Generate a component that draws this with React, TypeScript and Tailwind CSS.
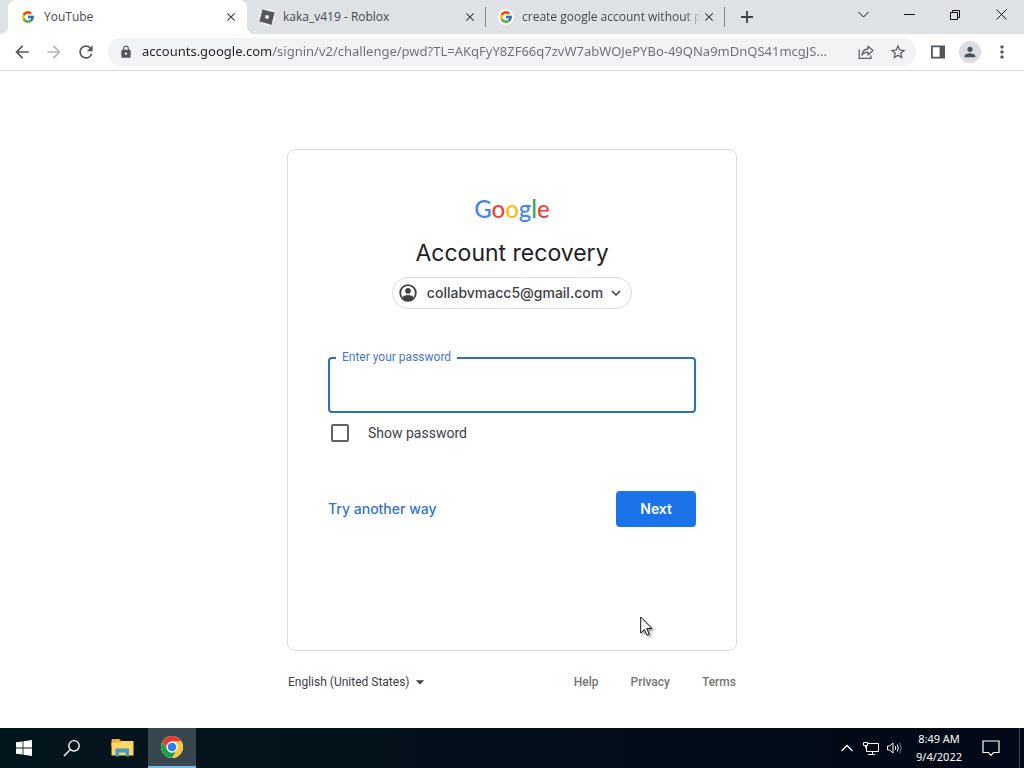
import { useState } from "react";
import type { ReactNode } from "react";
import { clsx } from "clsx";
import { FcGoogle } from "react-icons/fc";
import {
  MdArrowBack,
  MdArrowDropDown,
  MdArrowForward,
  MdClose,
  MdExpandMore,
  MdLock,
  MdMoreVert,
  MdPerson,
  MdRefresh,
  MdStarBorder,
} from "react-icons/md";

const RobloxIcon = () => (
  <svg viewBox="0 0 16 16" className="size-4">
    <path fillRule="evenodd" fill="#55575a" d="M3.4.4 15.6 3.6 12.5 15.7.4 12.4ZM6.7 5.9 6 9.3 9.3 10.1 10.1 6.7Z" />
  </svg>
);

const ShareIcon = () => (
  <svg viewBox="0 0 16 16" className="size-4" fill="none" stroke="#5f6368" strokeWidth="1.3">
    <path d="M1.2 5.5V14.3H13V11.5" />
    <path d="M4 11.3C4.3 7.6 6.4 5.2 10 5V2.2L15 6.6 10 10.9V8.2C7.2 8.2 5.2 9.2 4 11.3Z" strokeLinejoin="round" />
  </svg>
);

const SidePanelIcon = () => (
  <svg viewBox="0 0 16 16" className="size-4">
    <path fillRule="evenodd" fill="#54575b" d="M1 1.5H15V14.5H1ZM2.8 3.3V12.7H9.6V3.3Z" />
  </svg>
);

const AccountIcon = () => (
  <svg viewBox="0 0 18 18" className="size-[18px]">
    <circle cx="9" cy="9" r="7.8" fill="none" stroke="#3c4043" strokeWidth="1.8" />
    <circle cx="9" cy="6.9" r="2.8" fill="#3c4043" />
    <path d="M3.2 13.4C4.6 11.8 6.6 11 9 11S13.4 11.8 14.8 13.4C13.4 15.4 11.4 16.6 9 16.6S4.6 15.4 3.2 13.4Z" fill="#3c4043" />
  </svg>
);

const WindowsIcon = () => (
  <svg viewBox="0 0 16 16" className="size-4" fill="#fff">
    <path d="M0 2.3 6.6 1.4V7.6H0ZM7.4 1.2 16 0V7.6H7.4ZM0 8.4H6.6V14.6L0 13.7ZM7.4 8.4H16V16L7.4 14.8Z" />
  </svg>
);

const SearchIcon = () => (
  <svg viewBox="0 0 18 18" className="size-[18px]" fill="none" stroke="#fff" strokeWidth="1.4">
    <circle cx="11" cy="6.8" r="5.2" />
    <path d="M7.3 10.6 1 17" />
  </svg>
);

const ExplorerIcon = () => (
  <svg viewBox="0 0 24 20" className="h-5 w-6">
    <path fill="#e8b03a" d="M1.5 2Q1.5 1 2.5 1H9.5L11 3H22V8H1.5Z" />
    <path fill="#fbd665" d="M1.5 4.5H10.5L12 3H23.5V17.5H1.5Z" />
    <path fill="#4398c8" d="M5.5 18.5V11.5Q5.5 10.5 6.5 10.5H18Q19 10.5 19 11.5V18.5H15.5V14.5H9V18.5Z" />
  </svg>
);

const ChromeIcon = () => (
  <svg viewBox="0 0 48 48" className="size-6">
    <circle cx="24" cy="24" r="22" fill="#fff" />
    <path fill="#e33b2e" d="M4.95 13A22 22 0 0 1 43.05 13H24A11 11 0 0 0 14.47 29.5Z" />
    <path fill="#fcc934" d="M43.05 13A22 22 0 0 1 24 46L33.53 29.5A11 11 0 0 0 24 13Z" />
    <path fill="#1e9e4a" d="M24 46A22 22 0 0 1 4.95 13L14.47 29.5A11 11 0 0 0 33.53 29.5Z" />
    <circle cx="24" cy="24" r="11" fill="#fff" />
    <circle cx="24" cy="24" r="8.7" fill="#2f7de9" />
  </svg>
);

const NetworkIcon = () => (
  <svg viewBox="0 0 16 16" className="size-4" fill="none" stroke="#fff" strokeWidth="1">
    <path d="M5 3.5H15.5V11.5H3.5V6M9.5 11.5V14M5 14.5H12" />
    <path d="M.5 2.5H4.5V5.5H.5ZM2.5 5.5V8" />
  </svg>
);

const VolumeIcon = () => (
  <svg viewBox="0 0 16 16" className="size-4" fill="none" stroke="#fff" strokeWidth="1">
    <path d="M.5 6H2.7L6 3V13L2.7 10H.5Z" />
    <path d="M8.2 6Q9.4 8 8.2 10M10.3 4.5Q12.4 8 10.3 11.5" />
    <path d="M12.5 3Q15.6 8 12.5 13" stroke="#7c8590" />
  </svg>
);

const NotificationIcon = () => (
  <svg viewBox="0 0 18 18" className="size-[18px]" fill="none" stroke="#fff" strokeWidth="1.2">
    <path d="M1 2H17V13.5H11.5L9 16.3 6.5 13.5H1Z" />
  </svg>
);

type Tab = { title: string; icon: ReactNode };

const tabs: Tab[] = [
  { title: "YouTube", icon: <FcGoogle className="size-3.5" /> },
  { title: "kaka_v419 - Roblox", icon: <RobloxIcon /> },
  { title: "create google account without p", icon: <FcGoogle className="size-3.5" /> },
];

const windowButtons = [
  { label: "Search tabs", path: "M.5 3 5.5 8 10.5 3" },
  { label: "Minimize", path: "M0 5.5H11" },
  { label: "Restore", path: "M.5 3.5H7.5V10.5H.5ZM2.5 3.5V1.5H9.5V8.5H7.5" },
  { label: "Close", path: "M.5 .5 10.5 10.5M10.5 .5 .5 10.5" },
];

const logoLetters = [
  { letter: "G", color: "text-[#4285f4]" },
  { letter: "o", color: "text-[#ea4335]" },
  { letter: "o", color: "text-[#fbbc05]" },
  { letter: "g", color: "text-[#4285f4]" },
  { letter: "l", color: "text-[#34a853]" },
  { letter: "e", color: "text-[#ea4335]" },
];

const TabStrip = () => {
  const [active, setActive] = useState(0);

  return (
    <div className="flex h-[34px] bg-[#dee1e6] pl-2">
      {tabs.map((tab, i) => (
        <div
          key={tab.title}
          className={clsx(
            "relative flex w-[239px] min-w-0 items-center pr-2 pl-3",
            i === active &&
              "rounded-t-lg bg-white before:absolute before:bottom-0 before:-left-2 before:size-2 before:bg-[radial-gradient(circle_at_0_0,transparent_8px,#fff_8px)] after:absolute after:-right-2 after:bottom-0 after:size-2 after:bg-[radial-gradient(circle_at_100%_0,transparent_8px,#fff_8px)]",
            i !== active && "after:absolute after:right-0 after:h-5 after:w-px after:bg-[#85888d]"
          )}
        >
          <button
            onClick={() => setActive(i)}
            className="flex min-w-0 flex-1 items-center gap-2 font-['Open_Sans',sans-serif] text-xs text-[#45494d]"
          >
            <span className="flex size-4 shrink-0 items-center justify-center rounded-full bg-white/80">{tab.icon}</span>
            <span
              className={clsx(
                "flex-1 text-left whitespace-nowrap",
                i === 2 && "[mask-image:linear-gradient(to_left,transparent,#000_16px)]"
              )}
            >
              {tab.title}
            </span>
          </button>
          <button aria-label="Close tab" className="flex size-4 items-center justify-center text-[#3c4043]">
            <MdClose className="size-3.5" />
          </button>
        </div>
      ))}
      <button aria-label="New tab" className="flex w-11 items-center justify-center">
        <svg viewBox="0 0 12 12" className="size-3" stroke="#3c4043" strokeWidth="1.8">
          <path d="M6 0V12M0 6H12" />
        </svg>
      </button>
      <div className="ml-auto flex h-7">
        {windowButtons.map((b) => (
          <button key={b.label} aria-label={b.label} className="flex w-[46px] items-center justify-center">
            <svg viewBox="0 0 11 11" className="size-[11px]" fill="none" stroke="#111" strokeWidth="1">
              <path d={b.path} />
            </svg>
          </button>
        ))}
      </div>
    </div>
  );
};

const IconButton = ({ label, children }: { label: string; children: ReactNode }) => (
  <button aria-label={label} className="flex size-8 shrink-0 items-center justify-center text-[#54575b]">
    {children}
  </button>
);

const Toolbar = () => (
  <div className="flex h-[37px] items-center gap-1.5 border-b border-[#dadce0] bg-white px-1.5">
    <div className="flex">
      <IconButton label="Back">
        <MdArrowBack className="size-5" />
      </IconButton>
      <IconButton label="Forward">
        <MdArrowForward className="size-5 text-[#b5b7ba]" />
      </IconButton>
      <IconButton label="Reload">
        <MdRefresh className="size-5" />
      </IconButton>
    </div>
    <div className="flex h-7 min-w-0 flex-1 items-center rounded-full bg-[#f1f3f4] pr-0.5 pl-2.5">
      <span className="mr-2 flex w-4 justify-center text-[#54575b]">
        <MdLock className="size-3.5" />
      </span>
      {/* the host is darker than the rest of the address */}
      <input
        aria-label="Address"
        type="text"
        defaultValue="accounts.google.com/signin/v2/challenge/pwd?TL=AKqFyY8ZF66q7zvW7abWOJePYBo-49QNa9mDnQS41mcgJS..."
        className="min-w-0 flex-1 truncate bg-[linear-gradient(90deg,#202124_129px,#6a6e73_129px)] bg-clip-text text-[13px] text-transparent outline-none"
      />
      <IconButton label="Share">
        <ShareIcon />
      </IconButton>
      <IconButton label="Bookmark">
        <MdStarBorder className="size-[18px]" />
      </IconButton>
    </div>
    <div className="flex">
      <IconButton label="Side panel">
        <SidePanelIcon />
      </IconButton>
      <IconButton label="Profile">
        <span className="flex size-[22px] items-center justify-center rounded-full bg-[#dadce0]">
          <MdPerson className="size-4 text-[#46525e]" />
        </span>
      </IconButton>
      <IconButton label="Menu">
        <MdMoreVert className="size-5" />
      </IconButton>
    </div>
  </div>
);

const RecoveryCard = () => {
  const [show, setShow] = useState(false);

  return (
    <section className="relative min-h-[502px] rounded-lg border border-[#dadce0] px-10 pt-[47px] pb-10">
      <div className="flex flex-col items-center">
        <div aria-label="Google" className="font-['Lato'] text-2xl leading-6 font-medium">
          {logoLetters.map((l, i) => (
            <span key={i} className={l.color}>
              {l.letter}
            </span>
          ))}
        </div>
        <h1 className="mt-4 font-['Inter'] text-[23px] leading-8 text-[#202124]">Account recovery</h1>
        <button className="mt-2 flex h-8 items-center rounded-full border border-[#dadce0] px-1.5 font-['Inter'] text-sm font-medium text-[#3c4043]">
          <span className="mr-2.5">
            <AccountIcon />
          </span>
          collabvmacc5@gmail.com
          <MdExpandMore className="ml-1 size-[18px]" />
        </button>
      </div>
      <div className="relative mt-12">
        <label htmlFor="password" className="absolute -top-2 left-2 bg-white px-1.5 text-xs leading-4 text-[#4a74cf]">
          Enter your password
        </label>
        <input
          id="password"
          type={show ? "text" : "password"}
          className="block h-14 w-full rounded border-2 border-[#2a6fc4] px-3.5 text-base outline-none"
        />
      </div>
      <label className="flex h-10 items-center gap-[19px] pl-[3px] text-sm text-[#3c4043]">
        <input
          type="checkbox"
          checked={show}
          onChange={(e) => setShow(e.target.checked)}
          className="size-[18px] appearance-none rounded-xs border-2 border-[#5f6368] checked:bg-[#1a73e8]"
        />
        Show password
      </label>
      <div className="mt-[38px] flex items-center justify-between font-['Inter'] text-sm">
        <a href="#" className="font-medium text-[#3174cb]">
          Try another way
        </a>
        <button className="h-9 rounded bg-[#1a73e8] px-6 font-semibold text-white">Next</button>
      </div>
      <svg viewBox="0 0 13 20" className="absolute bottom-3.5 left-[352px] h-5 w-[13px] drop-shadow-[2px_2px_1px_rgba(0,0,0,0.35)]">
        <path d="M.7 1V17L4.4 13.5 7 19.2 9.2 18.2 6.8 12.6H12Z" fill="#fff" stroke="#111" strokeWidth="1" />
      </svg>
    </section>
  );
};

const Footer = () => (
  <footer className="mt-[21px] flex items-center justify-between px-px text-xs leading-4">
    <div className="flex items-center text-[#3c4043]">
      <select aria-label="Language" className="appearance-none outline-none">
        <option>English (United States)</option>
      </select>
      <MdArrowDropDown className="size-5" />
    </div>
    <nav className="flex gap-8 font-medium text-[#757575]">
      <a href="#">Help</a>
      <a href="#">Privacy</a>
      <a href="#">Terms</a>
    </nav>
  </footer>
);

const Taskbar = () => (
  <div className="flex h-10 bg-linear-to-r from-[#04161d] to-[#020817] text-white">
    <button aria-label="Start" className="flex w-12 items-center justify-center">
      <WindowsIcon />
    </button>
    <button aria-label="Search" className="flex w-12 items-center justify-center">
      <SearchIcon />
    </button>
    <button aria-label="File Explorer" className="flex w-[52px] items-center justify-center">
      <ExplorerIcon />
    </button>
    <button aria-label="Google Chrome" className="flex w-12 items-center justify-center border-b-2 border-[#76b9ed] bg-[#38474d]">
      <ChromeIcon />
    </button>
    <div className="ml-auto flex items-center">
      <button aria-label="Show hidden icons" className="flex w-6 justify-center">
        <svg viewBox="0 0 12 8" className="h-2 w-3" fill="none" stroke="#fff" strokeWidth="1.3">
          <path d="M.5 7 6 1.5 11.5 7" />
        </svg>
      </button>
      <button aria-label="Network" className="flex w-6 justify-center">
        <NetworkIcon />
      </button>
      <button aria-label="Volume" className="flex w-6 justify-center">
        <VolumeIcon />
      </button>
      <div className="w-16 text-center text-[11px] leading-[18px]">
        <div>8:49 AM</div>
        <div>9/4/2022</div>
      </div>
      <button aria-label="Notifications" className="flex w-10 justify-center">
        <NotificationIcon />
      </button>
      <button aria-label="Show desktop" className="ml-2 h-10 w-[5px] border-l border-[#3c4556]" />
    </div>
  </div>
);

export default function App() {
  return (
    <div className="flex min-h-screen flex-col bg-white font-['Noto_Sans',sans-serif]">
      <header>
        <TabStrip />
        <Toolbar />
      </header>
      <main className="mx-auto w-full max-w-[450px] flex-1 pt-[78px] font-['Roboto',sans-serif]">
        <RecoveryCard />
        <Footer />
      </main>
      <Taskbar />
    </div>
  );
}
